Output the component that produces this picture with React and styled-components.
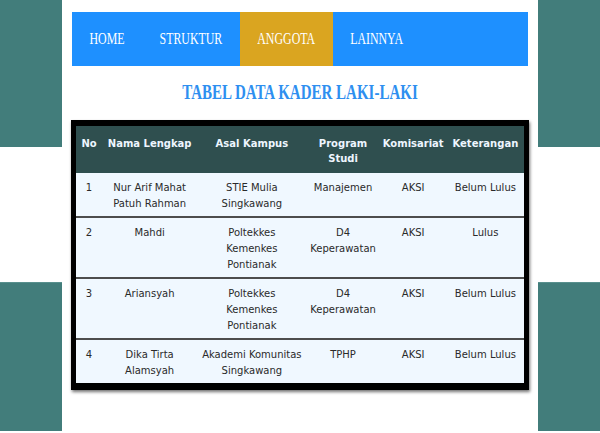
import React from "react";
import styled, { createGlobalStyle } from "styled-components";

const GlobalStyle = createGlobalStyle`
  html, body {
    margin: 0;
    padding: 0;
  }
  body {
    background: linear-gradient(
      to bottom,
      #427d7b 0,
      #427d7b 147px,
      #ffffff 147px,
      #ffffff 282px,
      #6fa3a1 282px,
      #427d7b 283px,
      #427d7b 431px,
      #ffffff 431px
    );
    background-repeat: no-repeat;
    min-height: 433px;
  }
`;

const Page = styled.div`
  width: 476px;
  min-height: 433px;
  margin: 0 auto;
  box-sizing: border-box;
  padding: 12px 10px 20px;
  background: #ffffff;
`;

const Nav = styled.ul`
  display: flex;
  list-style: none;
  margin: 0;
  padding: 0;
  height: 54px;
  background: #1e90ff;
`;

const NavItem = styled.li`
  display: flex;
  align-items: center;
  padding: 0 17.5px;
  background: ${(p) => (p.$active ? "#daa520" : "transparent")};
  color: #ffffff;
  font-family: "Liberation Serif", "Times New Roman", serif;
  font-size: 11.9px;
`;

const Squeeze = styled.span`
  display: inline-block;
  transform: scaleY(${(p) => p.$y || 1.38});
`;

const Title = styled.h2`
  margin: 0;
  height: 54px;
  display: flex;
  align-items: center;
  justify-content: center;
  color: #2e8ff0;
  font-family: "Liberation Serif", "Times New Roman", serif;
  font-size: 15px;
  font-weight: bold;
`;

const TableBox = styled.div`
  margin: 0 -1px;
  border: 5px solid #000;
  border-top-width: 6px;
  border-bottom-width: 7px;
  box-shadow: 1px 2px 3px rgba(0, 0, 0, 0.55);
`;

const Table = styled.table`
  width: 100%;
  border-collapse: collapse;
  table-layout: fixed;
  font-family: "DejaVu Sans", Verdana, sans-serif;
  font-size: 10px;
`;

const Th = styled.th`
  background: #2f4f4f;
  color: #eef6ff;
  font-weight: bold;
  line-height: 15px;
  padding: 10px 2px 7px;
  vertical-align: top;
  text-align: center;
`;

const Row = styled.tr`
  background: #f0f8ff;
  border-top: 2px solid #4d4d4d;
  &:first-child {
    border-top: none;
  }
`;

const Td = styled.td`
  color: #2a2a2a;
  line-height: 16px;
  padding: 7px 2px 4px;
  vertical-align: top;
  text-align: center;
  white-space: pre-line;
`;

const columns = [
  { label: "No", width: 26 },
  { label: "Nama Lengkap", width: 95 },
  { label: "Asal Kampus", width: 109 },
  { label: "Program Studi", width: 73 },
  { label: "Komisariat", width: 67 },
  { label: "Keterangan", width: 77 },
];

const rows = [
  ["1", "Nur Arif Mahat\nPatuh Rahman", "STIE Mulia\nSingkawang", "Manajemen", "AKSI", "Belum Lulus"],
  ["2", "Mahdi", "Poltekkes\nKemenkes\nPontianak", "D4\nKeperawatan", "AKSI", "Lulus"],
  ["3", "Ariansyah", "Poltekkes\nKemenkes\nPontianak", "D4\nKeperawatan", "AKSI", "Belum Lulus"],
  ["4", "Dika Tirta\nAlamsyah", "Akademi Komunitas\nSingkawang", "TPHP", "AKSI", "Belum Lulus"],
];

const menu = ["HOME", "STRUKTUR", "ANGGOTA", "LAINNYA"];

export default function App() {
  return (
    <>
      <GlobalStyle />
      <Page>
        <Nav>
          {menu.map((m) => (
            <NavItem key={m} $active={m === "ANGGOTA"}>
              <Squeeze>{m}</Squeeze>
            </NavItem>
          ))}
        </Nav>
        <Title>
          <Squeeze $y={1.33}>TABEL DATA KADER LAKI-LAKI</Squeeze>
        </Title>
        <TableBox>
          <Table>
            <colgroup>
              {columns.map((c) => (
                <col key={c.label} style={{ width: c.width }} />
              ))}
            </colgroup>
            <thead>
              <tr>
                {columns.map((c) => (
                  <Th key={c.label}>{c.label}</Th>
                ))}
              </tr>
            </thead>
            <tbody>
              {rows.map((r) => (
                <Row key={r[0]}>
                  {r.map((v, i) => (
                    <Td key={i}>{v}</Td>
                  ))}
                </Row>
              ))}
            </tbody>
          </Table>
        </TableBox>
      </Page>
    </>
  );
}
